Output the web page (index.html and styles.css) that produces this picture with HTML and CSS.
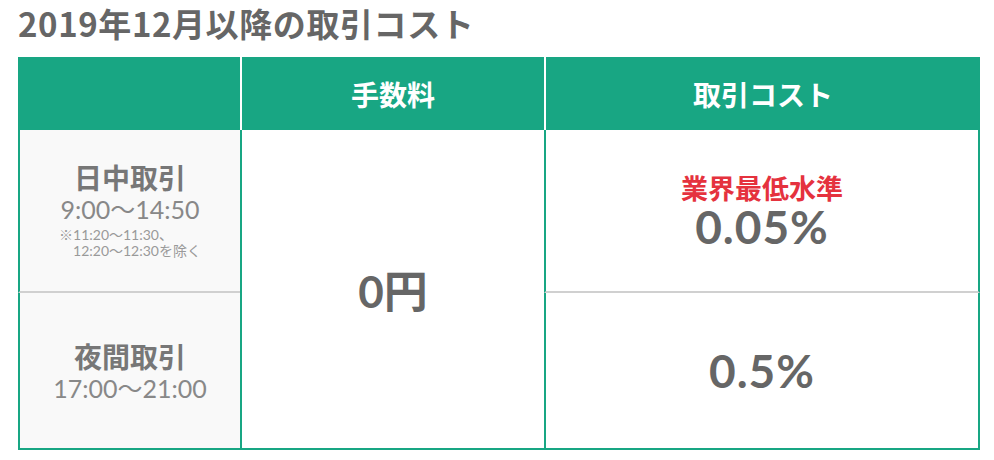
FILE: index.html
```html
<!DOCTYPE html>
<html lang="ja">
<head>
    <meta charset="UTF-8">
    <meta name="viewport" content="width=device-width, initial-scale=1.0">
    <title>2019年12月以降の取引コスト</title>
    <link rel="stylesheet" href="styles.css">
</head>
<body>

<div class="container">
    <h1>2019年12月以降の取引コスト</h1>

    <table class="cost-table">
        <colgroup>
            <col class="col-label">
            <col class="col-fee">
            <col class="col-cost">
        </colgroup>
        <thead>
            <tr>
                <th></th>
                <th>手数料</th>
                <th>取引コスト</th>
            </tr>
        </thead>
        <tbody>
            <tr class="row-day">
                <td class="label">
                    <div class="label-name">日中取引</div>
                    <div class="label-time">9:00〜14:50</div>
                    <div class="label-note">※11:20〜11:30、<br>12:20〜12:30を除く</div>
                </td>
                <td class="fee" rowspan="2">0円</td>
                <td class="cost">
                    <div class="cost-badge">業界最低水準</div>
                    <div class="cost-value">0.05%</div>
                </td>
            </tr>
            <tr class="row-night">
                <td class="label">
                    <div class="label-name">夜間取引</div>
                    <div class="label-time">17:00〜21:00</div>
                </td>
                <td class="cost">
                    <div class="cost-value">0.5%</div>
                </td>
            </tr>
        </tbody>
    </table>
</div>

</body>
</html>
```

FILE: styles.css
```css
body {
    margin: 0;
    font-family: "Noto Sans CJK JP", "Noto Sans", sans-serif;
    color: #666;
    background: #fff;
}
.container {
    padding: 0 14px 0 18px;
}
h1 {
    margin: 0 0 14px;
    padding-top: 3px;
    font-size: 33px;
    line-height: 40px;
    font-weight: 700;
    letter-spacing: 0.6px;
    color: #666;
}
.cost-table {
    width: 962px;
    table-layout: fixed;
    border-collapse: separate;
    border-spacing: 0;
}
.col-label { width: 222px; }
.col-fee { width: 304px; }
.col-cost { width: 436px; }

.cost-table th,
.cost-table td {
    box-sizing: border-box;
    padding: 0;
    text-align: center;
    vertical-align: middle;
}
.cost-table th {
    height: 73px;
    background: #18a683;
    color: #fff;
    font-size: 28px;
    font-weight: 700;
}
.cost-table th + th {
    border-left: 2px solid #fff;
}
.cost-table td {
    border-left: 2px solid #18a683;
}
.cost-table td.cost {
    border-right: 2px solid #18a683;
}
.row-day td {
    height: 163px;
}
.row-day td.label,
.row-day td.cost {
    border-bottom: 2px solid #d0d0d0;
}
.row-night td,
td.fee {
    border-bottom: 2px solid #18a683;
}
.row-night td {
    height: 157px;
}
td.label {
    background: #f9f9f9;
}
.label-name {
    font-size: 28px;
    line-height: 34px;
    font-weight: 700;
    color: #777;
}
.label-time {
    font-family: Lato, "Noto Sans CJK JP", sans-serif;
    font-size: 25px;
    line-height: 30px;
    color: #888;
}
.label-note {
    display: inline-block;
    margin-top: 3px;
    padding-left: 14px;
    text-indent: -14px;
    font-family: Lato, "Noto Sans CJK JP", sans-serif;
    font-size: 14px;
    line-height: 16px;
    color: #999;
    text-align: left;
}
td.fee {
    font-family: Lato, "Noto Sans CJK JP", sans-serif;
    font-size: 44px;
    font-weight: 700;
    color: #666;
}
.cost-badge {
    font-size: 27px;
    line-height: 32px;
    font-weight: 700;
    color: #e5323e;
}
.cost-value {
    font-family: Lato, "Noto Sans CJK JP", sans-serif;
    font-size: 46px;
    line-height: 46px;
    font-weight: 700;
    letter-spacing: 1px;
    color: #666;
}
```
